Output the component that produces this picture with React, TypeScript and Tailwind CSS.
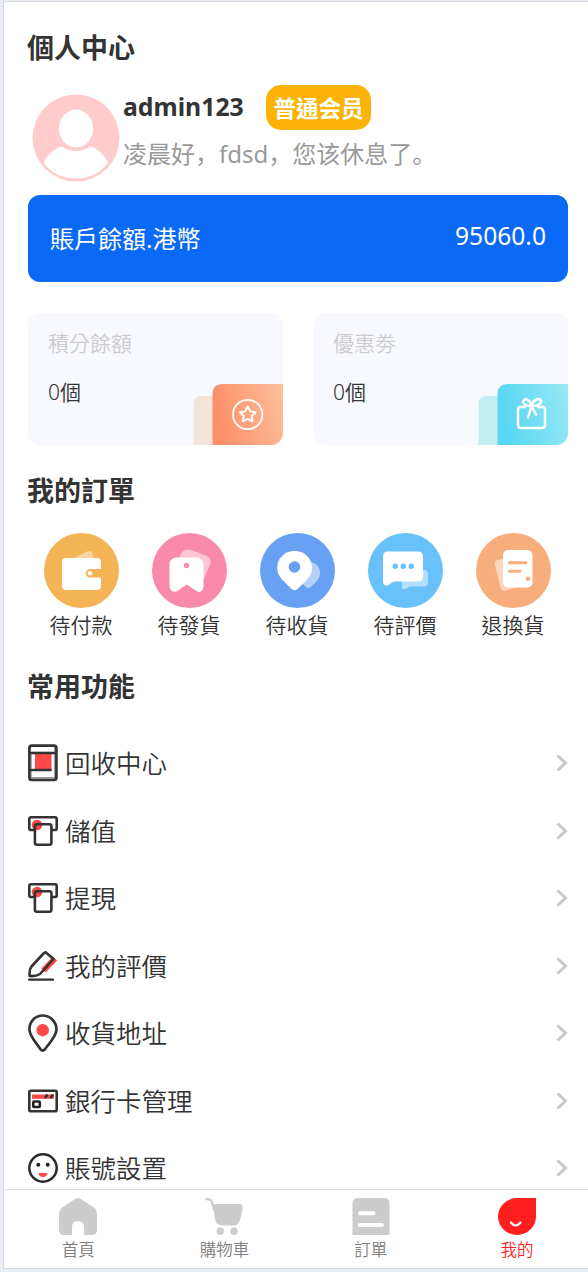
import React from 'react';

interface OrderEntry {
  label: string;
  color: string;
  icon: React.ReactNode;
}

interface MenuEntry {
  label: string;
  icon: React.ReactNode;
}

interface TabEntry {
  label: string;
  active?: boolean;
  icon: React.ReactNode;
}

const Avatar = () => (
  <svg width="88" height="88" viewBox="0 0 88 88" className="shrink-0">
    <circle cx="44" cy="44" r="43.5" fill="#ffcbcb" />
    <ellipse cx="44" cy="34.5" rx="17" ry="19" fill="#fff" />
    <path d="M11.5 69C15 60.5 22 55 30 52.5C38 58.5 50 58.5 58 52.5C66 55 72 60 76 68.5C69 79 57 84.5 44 84.5C31 84.5 19 79.5 11.5 69Z" fill="#fff" />
  </svg>
);

const WalletIcon = () => (
  <svg width="75" height="75" viewBox="0 0 75 75">
    <path d="M30 25L43 18.5Q47 17 48.5 20.5L50 25Z" fill="#fff" opacity=".45" />
    <path fillRule="evenodd" d="M22 25H53Q57 25 57 29V36H46A4.200 4.200 0 0 0 46 44.400H57V53Q57 57 53 57H22Q18 57 18 53V29Q18 25 22 25Z" fill="#fff" />
    <circle cx="46" cy="40.200" r="2.300" fill="#fff" />
  </svg>
);

const ShipIcon = () => (
  <svg width="75" height="75" viewBox="0 0 75 75">
    <path d="M27 24L31 18Q34 15.500 39 17L54 22.500Q60 25.500 58 32L51 48Z" fill="#fff" opacity=".5" />
    <path d="M17.500 32Q17.500 24.500 25 24.500H43.500Q51.500 24.500 51.500 32V53C51.500 58.500 47 60.500 44 57.500L34.500 51.500L27 57C23 60.500 18 58.500 17.500 53Z" fill="#fff" />
    <circle cx="34.500" cy="32.500" r="2.700" fill="#fa8aab" />
  </svg>
);

const ReceiveIcon = () => (
  <svg width="75" height="75" viewBox="0 0 75 75">
    <path d="M50 29C56 29 60 34 60 40C60 45 57 48 54 51L50 54.500Q48 55.500 46 54L42 50Z" fill="#fff" opacity=".5" />
    <path d="M34.500 18C44.500 18 52 25.500 52 34.500C52 40 49.500 44 46 48L37.500 56Q34.500 58.500 31.500 56L23 47.500C19.500 44 17.200 40 17.200 34.500C17.200 25.500 24.500 18 34.500 18Z" fill="#fff" />
    <circle cx="34.500" cy="34" r="5.800" fill="#68a0f3" />
  </svg>
);

const CommentIcon = () => (
  <svg width="75" height="75" viewBox="0 0 75 75">
    <path d="M34 37H56Q60 37 60 41V49Q60 53.500 56 53.500H42L37 56Q34 57 34 53Z" fill="#fff" opacity=".5" />
    <path d="M20 18.500H50Q55 18.500 55 23.500V43Q55 48.500 50 48.500H27Q24 48.500 22 51Q19 53.500 16.500 52Q15 51 15 49V23.500Q15 18.500 20 18.500Z" fill="#fff" />
    <g fill="#68c1fa">
      <circle cx="27.300" cy="33.300" r="2.700" />
      <circle cx="35.300" cy="33.300" r="2.700" />
      <circle cx="43.300" cy="33.300" r="2.700" />
    </g>
  </svg>
);

const RefundIcon = () => (
  <svg width="75" height="75" viewBox="0 0 75 75">
    <path d="M27 25.500L22 27Q18 28 19 32L24.500 55Q25.500 58.500 29 57.500L40 54.500Z" fill="#fff" opacity=".5" />
    <rect x="27" y="17" width="29.500" height="37.500" rx="5" fill="#fff" />
    <path d="M33.500 29.700H50M33.500 38.300H44" stroke="#f8ad7c" strokeWidth="3" strokeLinecap="round" />
    <circle cx="52" cy="45.700" r="2.300" fill="#f8ad7c" />
  </svg>
);

const RecycleIcon = () => (
  <svg width="30" height="38" viewBox="0 0 30 38" fill="none">
    <rect x="7" y="9" width="16.500" height="16.500" fill="#ff4848" />
    <path d="M3.300 9V34M26.400 3V34M3 33.500H27" stroke="#999" strokeWidth="1" />
    <rect x="1.400" y="1.700" width="27" height="34.200" rx="2.500" stroke="#333" strokeWidth="2.700" />
    <path d="M2 9H28" stroke="#333" strokeWidth="2.600" />
    <path d="M3 26H22.500" stroke="#333" strokeWidth="2.600" strokeLinecap="round" />
  </svg>
);

const AtmIcon = () => (
  <svg width="30" height="30" viewBox="0 0 30 30" fill="none">
    <circle cx="9" cy="9" r="5.300" fill="#ff4848" />
    <path d="M6.500 14H3Q1.300 14 1.300 12.200V3Q1.300 1.300 3 1.300H27Q28.700 1.300 28.700 3V12.200Q28.700 14 27 14H23.500" stroke="#333" strokeWidth="2.600" />
    <rect x="6.900" y="8.200" width="16.500" height="20.500" rx="2" stroke="#333" strokeWidth="2.600" />
  </svg>
);

const PencilIcon = () => (
  <svg width="30" height="30" viewBox="0 0 30 30" fill="none">
    <path d="M15.500 19.500L27 7.500" stroke="#ff4848" strokeWidth="6" />
    <path d="M17.700 1.300L25.500 8L12 23Q8 25.500 1.700 25Q1 18.500 3.500 15.500L15.500 2.500Q17 .7 18.500 2Z" stroke="#333" strokeWidth="2.600" strokeLinejoin="round" />
    <path d="M1.200 28.600H25" stroke="#333" strokeWidth="2.400" strokeLinecap="round" />
  </svg>
);

const AddressIcon = () => (
  <svg width="30" height="38" viewBox="0 0 30 38" fill="none">
    <path d="M14.700 1.500C22.500 1.500 28.500 8 28.500 15.500C28.500 22 21.500 29 16.700 35.500Q14.700 37.500 12.700 35.500C8.500 29 1.400 22 1.400 15.500C1.400 8 7 1.500 14.700 1.500Z" stroke="#333" strokeWidth="2.700" />
    <circle cx="14.700" cy="16.200" r="6.200" fill="#ff4848" />
  </svg>
);

const CardIcon = () => (
  <svg width="30" height="24" viewBox="0 0 30 24" fill="none">
    <path d="M4 5.500H26V9.800H4Z" fill="#ff4848" />
    <rect x="1.300" y="1.700" width="27.400" height="20.600" rx="1.500" stroke="#333" strokeWidth="2.600" />
    <path d="M17 9L19.500 5.500M22.500 9L25 5.500" stroke="#333" strokeWidth="2.600" />
    <rect x="5.300" y="12.500" width="6.500" height="5.500" rx="1" stroke="#222" strokeWidth="2.600" />
  </svg>
);

const SmileIcon = () => (
  <svg width="30" height="30" viewBox="0 0 30 30">
    <circle cx="15" cy="15" r="13.700" fill="none" stroke="#2b2b2b" strokeWidth="2.500" />
    <circle cx="10.300" cy="11.700" r="2" fill="#222" />
    <circle cx="19.700" cy="11.700" r="2" fill="#222" />
    <path d="M10.500 20H19.500Q19 24 15 24Q11 24 10.500 20Z" fill="#ff4848" />
  </svg>
);

const orders: OrderEntry[] = [
  { label: '待付款', color: 'bg-[#f4b455]', icon: <WalletIcon /> },
  { label: '待發貨', color: 'bg-[#fa8aab]', icon: <ShipIcon /> },
  { label: '待收貨', color: 'bg-[#68a0f3]', icon: <ReceiveIcon /> },
  { label: '待評價', color: 'bg-[#68c1fa]', icon: <CommentIcon /> },
  { label: '退換貨', color: 'bg-[#f8ad7c]', icon: <RefundIcon /> },
];

const menu: MenuEntry[] = [
  { label: '回收中心', icon: <RecycleIcon /> },
  { label: '儲值', icon: <AtmIcon /> },
  { label: '提現', icon: <AtmIcon /> },
  { label: '我的評價', icon: <PencilIcon /> },
  { label: '收貨地址', icon: <AddressIcon /> },
  { label: '銀行卡管理', icon: <CardIcon /> },
  { label: '賬號設置', icon: <SmileIcon /> },
];

const tabs: TabEntry[] = [
  {
    label: '首頁',
    icon: (
      <svg width="38" height="37" viewBox="0 0 38 37">
        <path d="M16.500 .8Q19 -.7 21.500 .8L35.500 10Q38 12 38 15V32Q38 37 33 37H25V29Q25 23 19 23Q13 23 13 29V37H5Q0 37 0 32V15Q0 12 2.500 10Z" fill="#ccc" />
      </svg>
    ),
  },
  {
    label: '購物車',
    icon: (
      <svg width="38" height="37" viewBox="0 0 38 37">
        <path d="M1.500 1.200Q6 .8 7.300 5L9 11" fill="none" stroke="#ccc" strokeWidth="2.400" strokeLinecap="round" />
        <path d="M7.500 6H34.500Q38 6 37.700 10L35 22Q33.500 27.500 28.500 27.500H17.500Q11 27.500 10 21Z" fill="#ccc" />
        <circle cx="15.300" cy="33.300" r="3.700" fill="#ccc" />
        <circle cx="29" cy="33.300" r="3.700" fill="#ccc" />
      </svg>
    ),
  },
  {
    label: '訂單',
    icon: (
      <svg width="38" height="37" viewBox="0 0 38 37">
        <path d="M6 0H32Q37.500 0 37.500 5.500V37H.5V5.500Q.5 0 6 0Z" fill="#ccc" />
        <path d="M8 15.300H21.500M8 27H30" stroke="#fff" strokeWidth="4" strokeLinecap="round" />
      </svg>
    ),
  },
  {
    label: '我的',
    active: true,
    icon: (
      <svg width="38" height="37" viewBox="0 0 38 37">
        <path d="M19 0H38V18.500A19 18.500 0 1 1 19 0Z" fill="#ff1f1f" />
        <path d="M13 24.500Q17.500 30.500 22.500 24.500" fill="none" stroke="#fff" strokeWidth="2.200" strokeLinecap="round" />
      </svg>
    ),
  },
];

const PointsArt = () => (
  <svg width="90" height="61" viewBox="0 0 90 61" className="absolute right-0 bottom-0">
    <defs>
      <linearGradient id="points" x1="0" x2="1" y1=".2" y2="0">
        <stop offset="0" stopColor="#fb9069" />
        <stop offset="1" stopColor="#fdbf9b" />
      </linearGradient>
    </defs>
    <path d="M.5 61V20Q.5 12 8.500 12H26V61Z" fill="#f5e4da" />
    <path d="M19.500 61V10Q19.500 0 29.500 0H90V61Z" fill="url(#points)" />
    <g fill="none" stroke="#fff" strokeLinejoin="round">
      <circle cx="54.700" cy="30.500" r="14.700" strokeWidth="1.700" />
      <path d="M54.700 22.500L57.200 27.400L62.600 28.200L58.700 32L59.600 37.400L54.700 34.900L49.800 37.400L50.700 32L46.800 28.200L52.200 27.400Z" strokeWidth="1.900" />
    </g>
  </svg>
);

const CouponArt = () => (
  <svg width="90" height="61" viewBox="0 0 90 61" className="absolute right-0 bottom-0">
    <defs>
      <linearGradient id="coupon" x1="0" x2="1" y1=".2" y2="0">
        <stop offset="0" stopColor="#58d6f3" />
        <stop offset="1" stopColor="#98e9f4" />
      </linearGradient>
    </defs>
    <path d="M.5 61V20Q.5 12 8.500 12H26V61Z" fill="#c2edf3" />
    <path d="M19.500 61V10Q19.500 0 29.500 0H90V61Z" fill="url(#coupon)" />
    <g fill="none" stroke="#fff" strokeWidth="2.500" strokeLinecap="round" strokeLinejoin="round">
      <path d="M47 23H42.500Q40 23 40 25.500V41Q40 44 43 44H64Q67 44 67 41V25.500Q67 23 64.500 23H60" />
      <path d="M53.500 22C47 22 44 19 45.500 16.500C48 13.500 53 17 53.500 22C54 17 60 13 63 16.500C64 20 59 22 53.500 22ZM53.500 22L50 33.500M53.500 22L58 30.500" />
    </g>
  </svg>
);

const Arrow = () => (
  <svg width="12" height="18" viewBox="0 0 12 18" fill="none">
    <path d="M1.500 1.500L9.500 9L1.500 16.500" stroke="#c8c8cc" strokeWidth="3" />
  </svg>
);

function StatCard({ title, art }: { title: string; art: React.ReactNode }) {
  return (
    <div className="relative h-[132px] w-[255px] overflow-hidden rounded-xl bg-[#f8f9ff] pt-[14px] pl-[20px] text-[21px]">
      <p className="h-8 leading-8 text-[#ccc]">{title}</p>
      <p className="mt-4 h-8 leading-[34px]">0個</p>
      {art}
    </div>
  );
}

export default function App() {
  return (
    <div className="h-[1272px] w-[588px] overflow-hidden bg-[#e8edf3] pt-px pl-[3px] font-['Noto_Sans','Noto_Sans_CJK_TC',sans-serif] font-[350] whitespace-nowrap text-[#333]">
      <div className="flex h-[1268px] w-[588px] flex-col border border-[#d5d9de] bg-white">
        <main className="h-[1187px] shrink-0 overflow-hidden pl-6">
          <h1 className="mt-[26px] -ml-px h-10 text-[27px] leading-10 font-bold">個人中心</h1>

          {/* Profile */}
          <div className="mt-[17px] flex h-[96px] pl-1">
            <div className="pt-[9px]">
              <Avatar />
            </div>
            <div className="pl-[3px]">
              <div className="flex items-center">
                <span className="w-[143px] pb-px text-[24.8px] font-bold">admin123</span>
                <span className="flex h-[45px] w-[105px] items-center justify-center rounded-[15px] bg-[#fcb307] pt-[3px] text-[22.5px] font-bold text-white">普通会员</span>
              </div>
              <p className="h-12 font-['Noto_Sans','Noto_Sans_CJK_SC',sans-serif] text-[24px] leading-[47px] font-normal text-[#999]">凌晨好，fdsd，您该休息了。</p>
            </div>
          </div>

          {/* Balance */}
          <div className="mt-[14px] flex h-[87px] w-[540px] items-center justify-between rounded-xl bg-[#0a6af7] pr-[22px] pl-[22px] text-[24px] font-normal text-white">
            <span>賬戶餘額.港幣</span>
            <span className="pb-1 text-[24.6px]">95060.0</span>
          </div>
          <div className="mt-[31px] flex gap-[30px]">
            <StatCard title="積分餘額" art={<PointsArt />} />
            <StatCard title="優惠劵" art={<CouponArt />} />
          </div>

          <h2 className="mt-[26px] -ml-px h-10 text-[27px] leading-10 font-bold">我的訂單</h2>
          <div className="mt-[22px] -ml-px flex w-[540px]">
            {orders.map((o) => (
              <div key={o.label} className="flex w-[108px] flex-col items-center">
                <div className={`h-[75px] w-[75px] rounded-full ${o.color}`}>{o.icon}</div>
                <span className="h-9 text-[21px] leading-[34px]">{o.label}</span>
              </div>
            ))}
          </div>

          <h2 className="mt-[23px] -ml-px h-10 text-[27px] leading-10 font-bold">常用功能</h2>
          <div className="mt-[22.5px] w-[540px]">
            {menu.map((m) => (
              <div key={m.label} className="flex h-[67.5px] items-center">
                {m.icon}
                <span className="ml-[7px] flex-1 text-[25.5px]">{m.label}</span>
                <Arrow />
              </div>
            ))}
          </div>
        </main>

        {/* Bottom tab bar */}
        <nav className="ml-px flex w-[585px] flex-1 border-t border-[#dcdcdc] bg-white">
          {tabs.map((t) => (
            <div key={t.label} className={`flex flex-1 flex-col items-center pt-2 text-[16.5px] ${t.active ? 'text-[#ff1f1f]' : 'text-[#808080]'}`}>
              {t.icon}
              <span className="leading-[30px]">{t.label}</span>
            </div>
          ))}
        </nav>
      </div>
    </div>
  );
}
